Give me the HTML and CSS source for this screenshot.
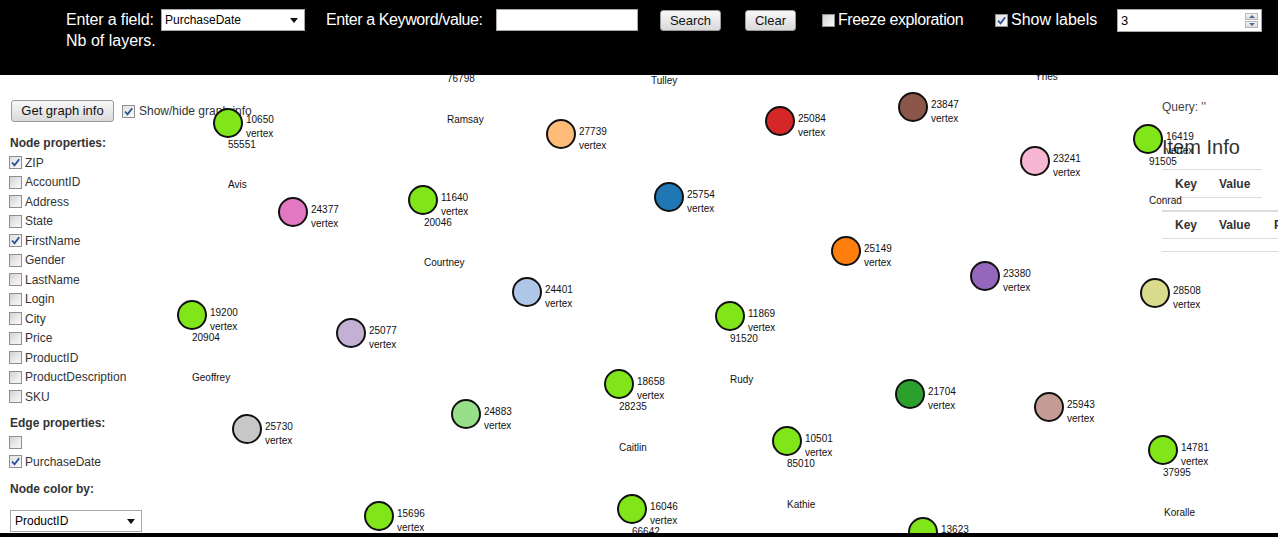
FILE: index.html
```html
<!DOCTYPE html>
<html>
<head>
<meta charset="utf-8">
<title>Graph explorer</title>
<link rel="stylesheet" href="styles.css">
</head>
<body>
<div class="page">
  <header class="topbar">
    <div class="bar-row">
      <span class="hlabel w-field">Enter a field:</span>
      <div class="fake-select sel-field"><span class="sel-text">PurchaseDate</span><i class="caret"></i></div>
      <span class="hlabel w-kw">Enter a Keyword/value:</span>
      <div class="textbox"></div>
      <button class="btn btn-search">Search</button>
      <button class="btn btn-clear">Clear</button>
      <span class="cb cb-freeze"></span>
      <span class="hlabel w-freeze">Freeze exploration</span>
      <span class="cb checked cb-show"><svg viewBox="0 0 11 11" width="11" height="11"><path d="M2 5.5 L4.5 8.3 L9.2 2.2" fill="none" stroke="#28509a" stroke-width="1.8"/></svg></span>
      <span class="hlabel w-show">Show labels</span>
      <div class="number">
        <span class="num-val">3</span>
        <div class="spin">
          <span class="spin-btn"><i class="tri-up"></i></span>
          <span class="spin-btn"><i class="tri-down"></i></span>
        </div>
      </div>
    </div>
    <div class="bar-row2">Nb of layers.</div>
  </header>

  <div class="content">
    <aside class="leftpanel">
      <div class="tool-row">
        <button class="btn btn-info">Get graph info</button>
        <span class="cb checked cb-toggle"><svg viewBox="0 0 11 11" width="11" height="11"><path d="M2 5.5 L4.5 8.3 L9.2 2.2" fill="none" stroke="#28509a" stroke-width="1.8"/></svg></span>
        <span class="toggle-text">Show/hide graph info</span>
      </div>

      <div class="section-title first">Node properties:</div>
      <div class="prop-row"><span class="cb checked"><svg viewBox="0 0 11 11" width="11" height="11"><path d="M2 5.5 L4.5 8.3 L9.2 2.2" fill="none" stroke="#28509a" stroke-width="1.8"/></svg></span><span class="prop-name">ZIP</span></div>
      <div class="prop-row"><span class="cb"></span><span class="prop-name">AccountID</span></div>
      <div class="prop-row"><span class="cb"></span><span class="prop-name">Address</span></div>
      <div class="prop-row"><span class="cb"></span><span class="prop-name">State</span></div>
      <div class="prop-row"><span class="cb checked"><svg viewBox="0 0 11 11" width="11" height="11"><path d="M2 5.5 L4.5 8.3 L9.2 2.2" fill="none" stroke="#28509a" stroke-width="1.8"/></svg></span><span class="prop-name">FirstName</span></div>
      <div class="prop-row"><span class="cb"></span><span class="prop-name">Gender</span></div>
      <div class="prop-row"><span class="cb"></span><span class="prop-name">LastName</span></div>
      <div class="prop-row"><span class="cb"></span><span class="prop-name">Login</span></div>
      <div class="prop-row"><span class="cb"></span><span class="prop-name">City</span></div>
      <div class="prop-row"><span class="cb"></span><span class="prop-name">Price</span></div>
      <div class="prop-row"><span class="cb"></span><span class="prop-name">ProductID</span></div>
      <div class="prop-row"><span class="cb"></span><span class="prop-name">ProductDescription</span></div>
      <div class="prop-row"><span class="cb"></span><span class="prop-name">SKU</span></div>

      <div class="section-title edge-title">Edge properties:</div>
      <div class="prop-row"><span class="cb"></span><span class="prop-name"></span></div>
      <div class="prop-row"><span class="cb checked"><svg viewBox="0 0 11 11" width="11" height="11"><path d="M2 5.5 L4.5 8.3 L9.2 2.2" fill="none" stroke="#28509a" stroke-width="1.8"/></svg></span><span class="prop-name">PurchaseDate</span></div>

      <div class="section-title color-title">Node color by:</div>
      <div class="fake-select sel-color"><span class="sel-text">ProductID</span><i class="caret"></i></div>
    </aside>

    <aside class="rightpanel">
      <div class="query">Query: ''</div>
      <h2 class="item-title">Item Info</h2>
      <table class="info-table t1">
        <tr><th class="c-key">Key</th><th class="c-val">Value</th></tr>
      </table>
      <table class="info-table t2">
        <tr><th class="c-key">Key</th><th class="c-val2">Value</th><th class="c-prop">Property</th></tr>
        <tr class="empty-row"><td></td><td></td><td></td></tr>
      </table>
    </aside>
  </div>

  <svg class="graph" width="1278" height="533" viewBox="0 0 1278 533">
    <g class="names">
      <text x="447" y="82">76798</text>
      <text x="651" y="83.5">Tulley</text>
      <text x="1035" y="80">Yhes</text>
      <text x="447" y="122.5">Ramsay</text>
      <text x="228" y="187.5">Avis</text>
      <text x="424" y="265.5">Courtney</text>
      <text x="1149" y="203.5">Conrad</text>
      <text x="192" y="380.5">Geoffrey</text>
      <text x="730" y="382.5">Rudy</text>
      <text x="619" y="450.5">Caitlin</text>
      <text x="787" y="507.5">Kathie</text>
      <text x="1164" y="515.5">Koralle</text>
    </g>

    <g class="node"><circle cx="228" cy="123" r="14" fill="#80e61a"/><text x="246" y="123">10650</text><text x="246" y="137">vertex</text><text x="228" y="148">55551</text></g>
    <g class="node"><circle cx="561" cy="134" r="14" fill="#ffbb78"/><text x="579" y="135">27739</text><text x="579" y="149">vertex</text></g>
    <g class="node"><circle cx="780" cy="121" r="14" fill="#d62728"/><text x="798" y="122">25084</text><text x="798" y="136">vertex</text></g>
    <g class="node"><circle cx="913" cy="107" r="14" fill="#8c564b"/><text x="931" y="108">23847</text><text x="931" y="122">vertex</text></g>
    <g class="node"><circle cx="1035" cy="161" r="14" fill="#f7b6d2"/><text x="1053" y="162">23241</text><text x="1053" y="176">vertex</text></g>
    <g class="node"><circle cx="293" cy="212" r="14" fill="#e377c2"/><text x="311" y="213">24377</text><text x="311" y="227">vertex</text></g>
    <g class="node"><circle cx="423" cy="200" r="14" fill="#80e61a"/><text x="441" y="201">11640</text><text x="441" y="215">vertex</text><text x="424" y="226">20046</text></g>
    <g class="node"><circle cx="669" cy="197" r="14" fill="#1f77b4"/><text x="687" y="198">25754</text><text x="687" y="212">vertex</text></g>
    <g class="node"><circle cx="846" cy="251" r="14" fill="#ff7f0e"/><text x="864" y="252">25149</text><text x="864" y="266">vertex</text></g>
    <g class="node"><circle cx="985" cy="276" r="14" fill="#9467bd"/><text x="1003" y="277">23380</text><text x="1003" y="291">vertex</text></g>
    <g class="node"><circle cx="1155" cy="293" r="14" fill="#dbdb8d"/><text x="1173" y="294">28508</text><text x="1173" y="308">vertex</text></g>
    <g class="node"><circle cx="527" cy="292" r="14" fill="#aec7e8"/><text x="545" y="293">24401</text><text x="545" y="307">vertex</text></g>
    <g class="node"><circle cx="192" cy="315" r="14" fill="#80e61a"/><text x="210" y="316">19200</text><text x="210" y="330">vertex</text><text x="192" y="341">20904</text></g>
    <g class="node"><circle cx="351" cy="333" r="14" fill="#c5b0d5"/><text x="369" y="334">25077</text><text x="369" y="348">vertex</text></g>
    <g class="node"><circle cx="730" cy="316" r="14" fill="#80e61a"/><text x="748" y="317">11869</text><text x="748" y="331">vertex</text><text x="730" y="342">91520</text></g>
    <g class="node"><circle cx="619" cy="384" r="14" fill="#80e61a"/><text x="637" y="385">18658</text><text x="637" y="399">vertex</text><text x="619" y="410">28235</text></g>
    <g class="node"><circle cx="910" cy="394" r="14" fill="#2ca02c"/><text x="928" y="395">21704</text><text x="928" y="409">vertex</text></g>
    <g class="node"><circle cx="1049" cy="407" r="14" fill="#c49c94"/><text x="1067" y="408">25943</text><text x="1067" y="422">vertex</text></g>
    <g class="node"><circle cx="466" cy="414" r="14" fill="#98df8a"/><text x="484" y="415">24883</text><text x="484" y="429">vertex</text></g>
    <g class="node"><circle cx="247" cy="429" r="14" fill="#c7c7c7"/><text x="265" y="430">25730</text><text x="265" y="444">vertex</text></g>
    <g class="node"><circle cx="787" cy="441" r="14" fill="#80e61a"/><text x="805" y="442">10501</text><text x="805" y="456">vertex</text><text x="787" y="467">85010</text></g>
    <g class="node"><circle cx="1163" cy="450" r="14" fill="#80e61a"/><text x="1181" y="451">14781</text><text x="1181" y="465">vertex</text><text x="1163" y="476">37995</text></g>
    <g class="node"><circle cx="379" cy="516" r="14" fill="#80e61a"/><text x="397" y="517">15696</text><text x="397" y="531">vertex</text><text x="379" y="542">30221</text></g>
    <g class="node"><circle cx="632" cy="509" r="14" fill="#80e61a"/><text x="650" y="510">16046</text><text x="650" y="524">vertex</text><text x="632" y="535">66642</text></g>
    <g class="node"><circle cx="923" cy="532" r="14" fill="#80e61a"/><text x="941" y="533">13623</text><text x="941" y="547">vertex</text></g>
    <g class="node"><circle cx="1148" cy="139" r="14" fill="#80e61a"/><text x="1166" y="140">16419</text><text x="1166" y="154">vertex</text><text x="1149" y="165">91505</text></g>
  </svg>
</div>
</body>
</html>
```

FILE: styles.css
```css
html, body {
  margin: 0;
  padding: 0;
}

body {
  background: #000;
  font-family: "Liberation Sans", Arial, sans-serif;
}

.page {
  position: relative;
  width: 1278px;
  height: 533px;
  background: #fff;
  overflow: hidden;
}

/* ---------- top bar ---------- */
.topbar {
  position: relative;
  z-index: 2;
  height: 75px;
  box-sizing: border-box;
  padding: 9px 0 0 66px;
  background: #000;
  color: #fff;
  font-size: 16px;
}

.bar-row {
  display: flex;
  align-items: center;
  height: 22px;
}

.bar-row2 {
  line-height: 20px;
  height: 20px;
}

.hlabel {
  white-space: nowrap;
  flex: none;
  line-height: 22px;
}

.w-field { width: 95px; letter-spacing: -0.15px; }
.w-kw { width: 164px; margin-left: 21px; letter-spacing: -0.4px; }
.w-freeze { width: 132px; margin-left: 3px; letter-spacing: -0.4px; }
.w-show { width: 86px; margin-left: 3px; }

.fake-select {
  position: relative;
  flex: none;
  box-sizing: border-box;
  height: 22px;
  background: #fff;
  border: 1px solid #a9a9a9;
  color: #000;
  font-size: 12px;
  line-height: 20px;
  padding-left: 3px;
}

.sel-field {
  width: 144px;
}

.caret {
  position: absolute;
  right: 6px;
  top: 8px;
  width: 0;
  height: 0;
  border-left: 4px solid transparent;
  border-right: 4px solid transparent;
  border-top: 5px solid #111;
}

.textbox {
  flex: none;
  width: 142px;
  height: 22px;
  box-sizing: border-box;
  margin-left: 6px;
  background: #fff;
  border: 1px solid #a9a9a9;
}

.btn {
  flex: none;
  box-sizing: border-box;
  height: 21px;
  padding: 0;
  border: 1px solid #9a9a9a;
  border-radius: 3px;
  background: linear-gradient(#f7f7f7, #e9e9e9 50%, #d9d9d9);
  color: #111;
  font-family: "Liberation Sans", Arial, sans-serif;
  font-size: 13px;
  line-height: 19px;
  text-align: center;
}

.btn-search { width: 61px; margin-left: 22px; }
.btn-clear { width: 51px; margin-left: 24px; }

.cb {
  display: inline-block;
  flex: none;
  position: relative;
  width: 13px;
  height: 13px;
  box-sizing: border-box;
  border: 1px solid #8e8f8f;
  background: linear-gradient(135deg, #d2d2d2 0%, #ececec 60%, #f6f6f6 100%);
}

.cb.checked {
  background: linear-gradient(135deg, #e2e2e2 0%, #f8f8f8 100%);
}

.cb svg {
  position: absolute;
  left: 0;
  top: 0;
  display: block;
}

.cb-freeze { margin-left: 26px; }
.cb-show { margin-left: 25px; }

.number {
  position: relative;
  flex: none;
  width: 145px;
  height: 23px;
  box-sizing: border-box;
  margin-left: 20px;
  background: #fff;
  border: 1px solid #a9a9a9;
  color: #000;
  font-size: 13px;
  line-height: 21px;
  padding-left: 3px;
}

.spin {
  position: absolute;
  right: 3px;
  top: 3px;
  width: 13px;
  height: 15px;
  display: flex;
  flex-direction: column;
  gap: 1px;
}

.spin-btn {
  flex: 1;
  display: flex;
  align-items: center;
  justify-content: center;
  box-sizing: border-box;
  border: 1px solid #b7b7b7;
  background: linear-gradient(#f4f4f4, #dcdcdc);
}

.tri-up {
  width: 0;
  height: 0;
  border-left: 3px solid transparent;
  border-right: 3px solid transparent;
  border-bottom: 3px solid #4a6a9a;
}

.tri-down {
  width: 0;
  height: 0;
  border-left: 3px solid transparent;
  border-right: 3px solid transparent;
  border-top: 3px solid #4a6a9a;
}

/* ---------- content ---------- */
.content {
  display: flex;
  justify-content: space-between;
}

.leftpanel {
  width: 260px;
  padding: 25px 0 0 9px;
  color: #333;
  font-size: 12px;
}

.tool-row {
  display: flex;
  align-items: center;
  height: 22px;
}

.btn-info {
  width: 103px;
  height: 22px;
  margin-left: 2px;
  line-height: 20px;
}

.cb-toggle {
  margin-left: 8px;
}

.toggle-text {
  margin-left: 4px;
  white-space: nowrap;
}

.section-title {
  font-weight: bold;
  line-height: 20px;
  height: 20px;
  padding-left: 1px;
  color: #333;
}

.section-title.first {
  margin-top: 11px;
}

.section-title.edge-title {
  margin-top: 6px;
}

.section-title.color-title {
  margin-top: 7px;
}

.prop-row {
  display: flex;
  align-items: center;
  height: 19.5px;
}

.prop-name {
  margin-left: 3px;
  white-space: nowrap;
}

.sel-color {
  width: 132px;
  margin-top: 11px;
  margin-left: 1px;
  font-size: 12px;
  padding-left: 4px;
}

.rightpanel {
  width: 116px;
  padding-top: 25px;
  color: #333;
  font-size: 12px;
}

.query {
  line-height: 14px;
  color: #444;
}

.item-title {
  margin: 21px 0 0 0;
  font-size: 20px;
  font-weight: normal;
  line-height: 24px;
  color: #333;
  white-space: nowrap;
}

.info-table {
  border-collapse: collapse;
  font-size: 12px;
  color: #333;
}

.info-table th {
  text-align: left;
  font-weight: bold;
  padding: 0;
  height: 27px;
  white-space: nowrap;
}

.t1 {
  width: 100px;
  margin-top: 10px;
  border-top: 1px solid #ddd;
  border-bottom: 1px solid #ddd;
}

.t2 {
  width: 170px;
  margin-top: 12px;
  border-top: 2px solid #ddd;
}

.t2 th {
  height: 26px;
  border-bottom: 1px solid #ddd;
}

.c-key {
  width: 44px;
  padding-left: 13px !important;
}

.c-val { width: 43px; }
.c-val2 { width: 55px; }
.c-prop { width: 58px; }

.empty-row td {
  height: 12px;
  padding: 0;
  border-bottom: 1px solid #ddd;
}

/* ---------- graph canvas ---------- */
.graph {
  position: absolute;
  left: 0;
  top: 0;
  z-index: 1;
  pointer-events: none;
}

.graph text {
  font-family: "Liberation Sans", Arial, sans-serif;
  font-size: 10px;
  fill: #111;
}

.graph circle {
  stroke: #111;
  stroke-width: 2;
}
```
